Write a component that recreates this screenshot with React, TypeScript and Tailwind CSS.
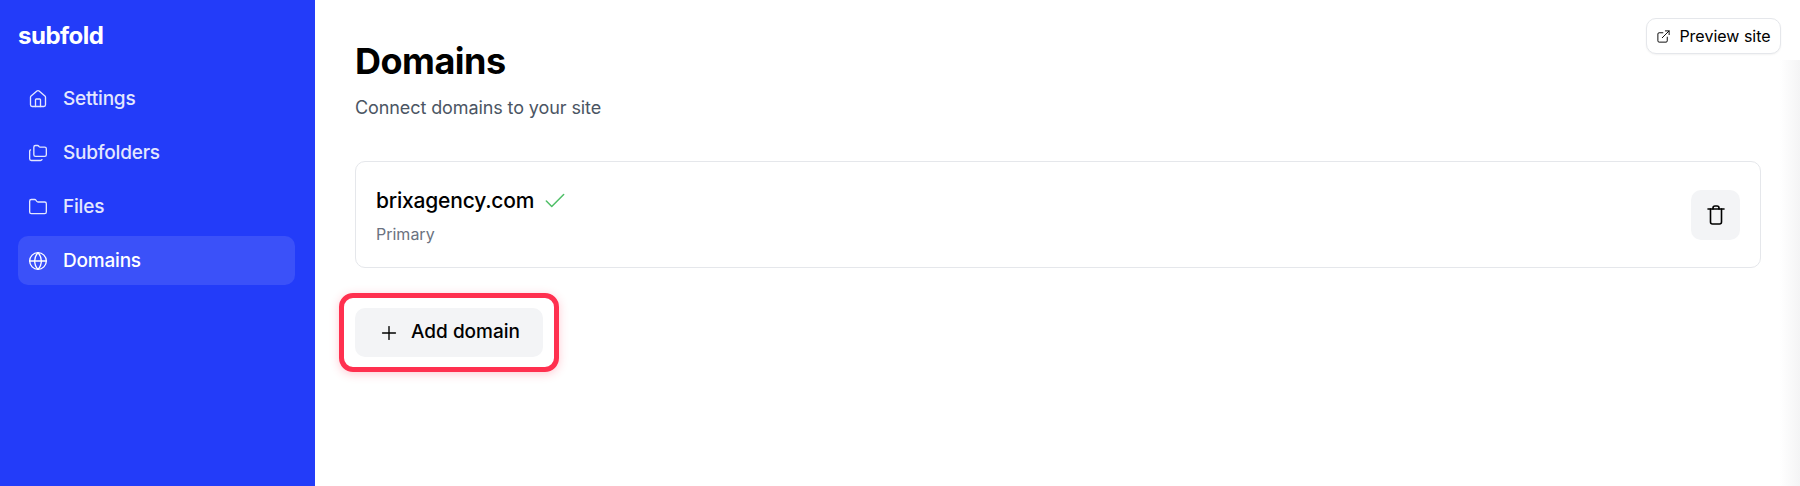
import { Home, Folders, Folder, Globe, ExternalLink, Check, Plus } from "lucide-react";

const nav = [
  { label: "Settings", Icon: Home },
  { label: "Subfolders", Icon: Folders },
  { label: "Files", Icon: Folder },
  { label: "Domains", Icon: Globe, active: true },
];

export default function App() {
  return (
    <div className="relative flex h-[486px] w-[1800px] overflow-hidden bg-white font-['Inter',sans-serif]">
      <aside className="w-[315px] shrink-0 bg-[#233cf9] pt-[20px] pr-[20px] pl-[18px]">
        <div className="text-[24px] leading-[32px] font-bold tracking-[-0.5px] text-white">subfold</div>
        <nav className="mt-[22px] flex flex-col gap-[5px]">
          {nav.map(({ label, Icon, active }) => (
            <div
              key={label}
              className={`flex h-[49px] items-center gap-[15px] rounded-[10px] pl-[10px] text-[19px] font-[450] tracking-[-0.2px] ${active ? "bg-[#3b51f9] text-white" : "text-[#e4e7fe]"}`}
            >
              <Icon size={20} strokeWidth={1.6} />
              <span className="pt-[2px]">{label}</span>
            </div>
          ))}
        </nav>
      </aside>
      <main className="min-w-0 flex-1 pt-[36px] pl-[40px]">
        <div className="w-[1406px]">
          <h1 className="text-[36px] leading-[50px] font-bold tracking-[-0.5px] text-black">Domains</h1>
          <p className="mt-[9px] text-[18px] leading-[26px] tracking-[-0.1px] text-[#4b5563]">Connect domains to your site</p>
          <div className="mt-[40px] flex h-[107px] items-center justify-between rounded-[10px] border border-[#e5e7eb] pr-[20px] pl-[20px]">
            <div className="pt-[3px]">
              <div className="flex items-center gap-[8px]">
                <span className="text-[21px] leading-[28px] font-[450] tracking-[-0.2px] text-black">brixagency.com</span>
                <Check size={26} strokeWidth={1.4} className="text-[#4fbf67]" />
              </div>
              <div className="mt-[7px] text-[16px] leading-[24px] text-[#6b7280]">Primary</div>
            </div>
            <button className="flex h-[50px] w-[49px] items-center justify-center rounded-[10px] bg-[#f3f4f6] text-black">
              <svg width="24" height="24" viewBox="0 0 24 24" fill="none" stroke="currentColor" strokeWidth="1.6" strokeLinecap="round" strokeLinejoin="round">
                <path d="M4 6h16" />
                <path d="M6.5 6v13a2 2 0 0 0 2 2h7a2 2 0 0 0 2-2V6" />
                <path d="M9 6V5a2 2 0 0 1 2-2h2a2 2 0 0 1 2 2v1" />
              </svg>
            </button>
          </div>
          <div className="relative mt-[40px] w-fit">
            <div className="absolute -inset-x-[16px] -inset-y-[15px] rounded-[14px] border-[5px] border-[#ff304f] shadow-[0_2px_10px_rgba(255,48,79,0.25)]" />
            <button className="flex h-[49px] w-[188px] items-center gap-[11px] rounded-[10px] bg-[#f3f4f6] pl-[23px] text-[19px] font-[450] text-black">
              <Plus size={22} strokeWidth={1.5} />
              <span>Add domain</span>
            </button>
          </div>
        </div>
      </main>
      <button className="absolute top-[18px] right-[19px] z-10 flex h-[36px] w-[135px] items-center justify-center gap-[8px] rounded-[10px] border border-[#e5e7eb] bg-white text-[16px] text-black shadow-[0_1px_2px_rgba(0,0,0,0.05)]">
        <ExternalLink size={15} strokeWidth={1.5} />
        <span>Preview site</span>
      </button>
      <div className="absolute top-[60px] right-0 bottom-0 w-[20px] bg-gradient-to-r from-transparent to-[#f4f4f5]" />
    </div>
  );
}
